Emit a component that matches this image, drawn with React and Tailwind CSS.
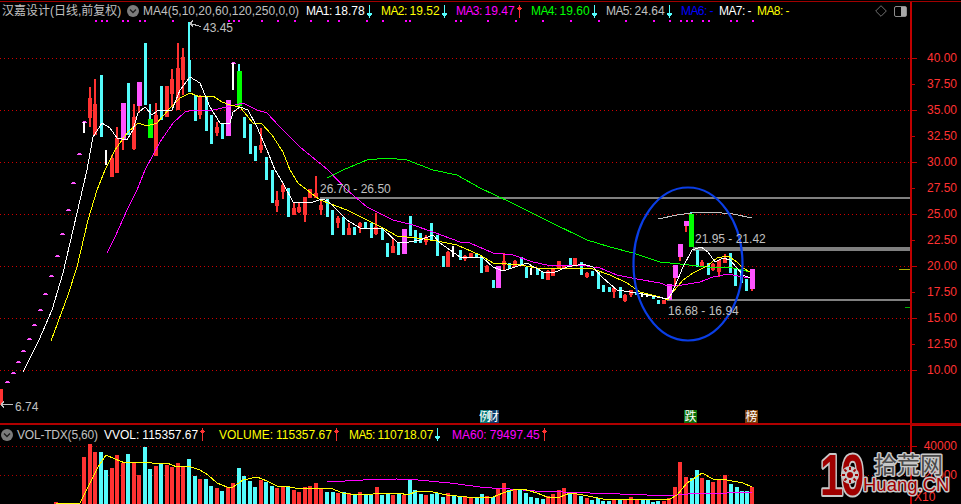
const RED = "#ff3232";
const CYAN = "#54fcfc";
const PINK = "#ff54ff";
const GREEN = "#00ff00";
const WHITE = "#ffffff";

// [x, color, high, bodyTop, bodyBottom, low]
const candles = [
  [84, WHITE, 122, 122, 133, 133], [90, RED, 87, 98, 118, 127], [95, RED, 79, 104, 135, 135],
  [101, CYAN, 75, 75, 137, 137], [106, WHITE, 150, 150, 165, 165], [112, RED, 155, 158, 177, 177],
  [117, RED, 127, 138, 173, 173], [123, PINK, 103, 103, 140, 150], [128, CYAN, 83, 83, 135, 135],
  [134, RED, 104, 117, 149, 150], [139, PINK, 82, 82, 106, 113], [145, CYAN, 43, 43, 105, 105],
  [150, GREEN, 104, 119, 138, 138], [156, RED, 103, 115, 156, 156], [161, CYAN, 86, 86, 120, 120],
  [167, RED, 86, 86, 117, 117], [172, RED, 69, 79, 94, 107], [178, RED, 43, 68, 110, 110],
  [183, RED, 48, 57, 80, 95], [189, CYAN, 22, 60, 92, 92], [195, CYAN, 95, 95, 121, 121],
  [200, RED, 95, 97, 115, 119], [206, CYAN, 97, 97, 131, 131], [211, CYAN, 115, 115, 144, 144],
  [217, RED, 122, 127, 133, 136], [222, CYAN, 123, 123, 139, 139], [228, PINK, 100, 100, 136, 136],
  [233, WHITE, 63, 63, 90, 90], [239, GREEN, 64, 71, 106, 106], [244, CYAN, 117, 117, 138, 138],
  [250, CYAN, 124, 124, 154, 154], [255, CYAN, 146, 146, 161, 161], [261, RED, 128, 145, 150, 153],
  [266, CYAN, 157, 157, 180, 180], [272, CYAN, 170, 170, 203, 203], [277, RED, 191, 200, 206, 212],
  [283, RED, 183, 185, 192, 199], [288, CYAN, 188, 188, 217, 217], [294, RED, 202, 208, 215, 215],
  [299, RED, 202, 207, 212, 213], [305, RED, 197, 197, 215, 222], [310, RED, 189, 189, 198, 198],
  [316, RED, 176, 193, 198, 198], [321, RED, 200, 205, 210, 215], [327, CYAN, 199, 199, 217, 217],
  [332, CYAN, 210, 210, 235, 235], [338, RED, 216, 218, 223, 228], [343, CYAN, 217, 217, 235, 235],
  [349, RED, 223, 228, 235, 235], [354, CYAN, 227, 227, 235, 235], [360, RED, 222, 223, 227, 233],
  [365, CYAN, 222, 222, 228, 228], [371, CYAN, 223, 223, 238, 238], [376, RED, 213, 227, 234, 235],
  [382, CYAN, 228, 228, 240, 240], [387, CYAN, 243, 243, 257, 257], [393, RED, 238, 246, 253, 253],
  [398, CYAN, 243, 243, 255, 255], [404, PINK, 229, 229, 254, 254], [410, CYAN, 216, 216, 236, 236],
  [415, CYAN, 230, 230, 243, 243], [420, CYAN, 233, 233, 243, 243], [426, RED, 235, 237, 242, 245],
  [431, CYAN, 223, 223, 241, 241], [437, CYAN, 235, 235, 256, 256], [443, CYAN, 256, 256, 267, 267],
  [448, RED, 251, 252, 267, 267], [453, WHITE, 246, 246, 257, 257], [460, CYAN, 250, 250, 260, 260],
  [465, RED, 255, 256, 259, 261], [471, RED, 253, 253, 258, 258], [476, CYAN, 253, 253, 258, 258],
  [481, CYAN, 256, 256, 273, 273], [487, RED, 265, 266, 272, 272], [493, CYAN, 280, 280, 288, 288],
  [498, PINK, 266, 266, 288, 288], [504, RED, 253, 261, 265, 270], [509, CYAN, 263, 263, 269, 269],
  [515, RED, 260, 261, 267, 267], [521, CYAN, 257, 257, 266, 266], [526, CYAN, 267, 267, 278, 278],
  [531, WHITE, 268, 268, 275, 275], [537, CYAN, 268, 268, 275, 275], [542, CYAN, 272, 272, 279, 279],
  [548, RED, 270, 271, 280, 280], [553, RED, 268, 268, 276, 276], [559, RED, 261, 261, 268, 268],
  [564, RED, 265, 265, 268, 268], [570, CYAN, 258, 258, 266, 266], [575, RED, 258, 258, 265, 265],
  [581, CYAN, 262, 262, 275, 275], [587, RED, 272, 273, 277, 278], [592, CYAN, 271, 271, 276, 276],
  [598, CYAN, 272, 272, 289, 289], [603, CYAN, 285, 285, 292, 292], [609, CYAN, 287, 287, 292, 292],
  [614, RED, 288, 288, 292, 298], [620, CYAN, 287, 287, 298, 298], [625, RED, 294, 295, 301, 302],
  [631, RED, 290, 290, 295, 297], [636, CYAN, 292, 292, 295, 295], [642, WHITE, 293, 293, 297, 297],
  [647, WHITE, 294, 294, 297, 297], [653, CYAN, 295, 295, 299, 299], [658, CYAN, 300, 300, 304, 304],
  [664, RED, 300, 300, 304, 304], [669, PINK, 284, 284, 300, 300], [675, PINK, 265, 265, 278, 287],
  [680, PINK, 244, 244, 257, 261], [686, PINK, 221, 221, 226, 232], [691, GREEN, 212, 214, 247, 247],
  [697, CYAN, 250, 250, 267, 267], [702, RED, 260, 262, 266, 267], [708, CYAN, 263, 263, 275, 275],
  [713, RED, 263, 264, 270, 271], [719, RED, 260, 260, 272, 277], [725, RED, 254, 258, 263, 263],
  [730, CYAN, 253, 253, 273, 273], [735, CYAN, 268, 268, 286, 286], [741, CYAN, 270, 270, 283, 283],
  [746, CYAN, 279, 279, 291, 291], [752, PINK, 269, 269, 289, 291],
];

const limitMarks = [[7, 382], [13, 373], [18, 362], [23, 351], [29, 339], [34, 325], [40, 310], [45, 294], [51, 276], [57, 256], [62, 234], [68, 210], [73, 183], [79, 154], [84, 122], [233, 63]];

const topDots = [95, 101, 106, 122, 127, 139, 144, 172, 228, 233, 238, 261, 277, 294, 310, 327, 338, 366, 382, 405, 409, 455, 460, 487, 515, 542, 570, 598, 625, 653, 669, 680, 686, 691, 702, 708, 730, 736, 752];

const maWhite = [[23, 372], [39, 340], [52, 310], [63, 273], [77, 213], [87, 170], [93, 137], [102, 123], [110, 128], [117, 138], [127, 140], [133, 130], [138, 113], [145, 107], [152, 115], [157, 111], [172, 110], [180, 90], [190, 77], [200, 83], [210, 107], [220, 123], [230, 123], [233, 112], [240, 107], [248, 110], [257, 127], [267, 150], [275, 170], [283, 183], [293, 202], [310, 203], [322, 199], [328, 201], [347, 220], [360, 228], [383, 229], [397, 242], [403, 243], [420, 240], [433, 235], [440, 243], [460, 257], [482, 257], [493, 267], [503, 271], [515, 267], [527, 263], [543, 272], [553, 273], [567, 267], [583, 264], [593, 267], [603, 278], [617, 290], [637, 293], [657, 297], [668, 299], [672, 293], [683, 267], [692, 250], [701, 247], [708, 252], [715, 262], [723, 258], [730, 260], [737, 268], [743, 275], [750, 278]];

const maYellow = [[51, 341], [68, 295], [77, 267], [88, 220], [97, 190], [105, 170], [115, 150], [127, 133], [138, 123], [147, 126], [157, 123], [170, 108], [180, 98], [190, 93], [200, 97], [213, 96], [222, 102], [230, 105], [240, 107], [253, 123], [262, 124], [272, 135], [283, 152], [290, 170], [298, 183], [320, 200], [347, 210], [367, 220], [383, 228], [397, 236], [417, 238], [437, 241], [457, 245], [480, 255], [493, 263], [507, 264], [520, 265], [543, 269], [560, 268], [573, 268], [593, 269], [610, 275], [627, 283], [640, 292], [660, 297], [668, 300], [672, 293], [683, 280], [693, 273], [707, 266], [717, 258], [728, 256], [737, 262], [743, 268], [750, 272]];

const maMagenta = [[107, 253], [115, 237], [127, 210], [137, 190], [145, 170], [160, 142], [173, 123], [185, 112], [193, 110], [213, 110], [227, 107], [243, 103], [257, 110], [267, 113], [280, 127], [300, 147], [328, 170], [347, 190], [367, 207], [393, 220], [413, 225], [433, 232], [460, 242], [470, 243], [493, 253], [513, 255], [533, 262], [547, 265], [580, 265], [600, 268], [617, 275], [637, 279], [660, 283], [668, 286], [682, 285], [700, 282], [713, 277], [728, 274], [738, 276], [750, 278]];

const maGreen = [[327, 178], [343, 170], [367, 160], [387, 158], [407, 160], [433, 170], [457, 175], [480, 188], [510, 202], [550, 222], [587, 240], [610, 247], [633, 253], [660, 262], [680, 264], [707, 267], [733, 268], [750, 272]];

const maGray = [[658, 219], [677, 215], [692, 213], [710, 212], [733, 214], [752, 218]];

// [x, isCyan, top in the 3x crop]
const volBars = [
  [56, 0, 307], [84, 0, 172], [90, 0, 132], [95, 0, 157], [101, 1, 155], [106, 1, 210], [112, 0, 203], [117, 0, 165], [123, 0, 190], [128, 1, 162], [134, 0, 187], [139, 0, 225], [145, 1, 140], [150, 1, 207], [156, 0, 197], [161, 1, 190], [167, 0, 195], [172, 0, 200], [178, 0, 190], [183, 0, 198], [189, 1, 177], [195, 1, 228], [200, 0, 238], [206, 1, 237], [211, 1, 258], [217, 0, 265], [222, 1, 272], [228, 0, 262], [233, 0, 250], [239, 1, 204], [244, 1, 228], [250, 1, 242], [255, 1, 260], [261, 0, 241], [266, 1, 245], [272, 1, 257], [277, 0, 265], [283, 0, 262], [288, 1, 258], [294, 0, 270], [299, 0, 277], [305, 0, 260], [310, 0, 258], [316, 0, 250], [321, 0, 268], [327, 1, 275], [333, 1, 275], [338, 0, 280], [344, 1, 277], [349, 0, 280], [355, 1, 283], [360, 0, 277], [366, 1, 283], [371, 1, 285], [377, 0, 262], [382, 1, 285], [388, 1, 280], [393, 0, 285], [399, 1, 282], [404, 0, 284], [410, 1, 238], [415, 1, 270], [421, 1, 282], [426, 0, 285], [432, 1, 282], [437, 1, 280], [443, 1, 290], [448, 0, 280], [454, 1, 285], [460, 1, 290], [465, 0, 292], [471, 0, 293], [477, 1, 292],
  [482, 1, 282], [487, 0, 288], [493, 1, 292], [498, 0, 265], [504, 0, 250], [509, 1, 270], [515, 0, 270], [520, 1, 268], [526, 1, 278], [531, 1, 290], [537, 1, 293], [543, 1, 296], [548, 0, 288], [553, 0, 283], [559, 0, 270], [564, 0, 265], [570, 1, 280], [575, 0, 283], [581, 1, 288], [587, 0, 295], [592, 1, 300], [598, 1, 293], [603, 1, 303], [609, 1, 302], [614, 0, 297], [620, 1, 297], [625, 0, 298], [631, 0, 292], [637, 0, 296], [643, 1, 297], [648, 1, 299], [653, 1, 305], [658, 1, 303], [664, 0, 302], [669, 0, 295], [675, 0, 260], [680, 0, 185], [686, 0, 230], [692, 1, 235], [697, 1, 210], [702, 0, 235], [708, 1, 240], [713, 0, 247], [719, 0, 240], [725, 0, 224], [731, 1, 252], [737, 1, 262], [742, 1, 272], [747, 1, 273], [752, 0, 260],
];

const volYellow = [[56, 503], [80, 503], [90, 483], [98, 467], [106, 455], [115, 459], [125, 463], [135, 462], [147, 462], [157, 464], [167, 463], [177, 467], [188, 466], [200, 470], [208, 475], [217, 483], [227, 487], [233, 487], [243, 480], [257, 477], [267, 481], [277, 486], [290, 487], [300, 489], [330, 488], [343, 493], [357, 495], [373, 494], [400, 493], [407, 495], [418, 491], [433, 492], [447, 495], [467, 497], [480, 497], [493, 497], [503, 493], [513, 490], [523, 489], [537, 493], [547, 497], [560, 497], [570, 493], [583, 495], [603, 499], [647, 499], [670, 499], [677, 495], [687, 483], [702, 473], [713, 479], [727, 480], [743, 483], [752, 487]];

const volMagenta = [[327, 482], [363, 480], [397, 479], [418, 480], [450, 483], [480, 487], [492, 488], [510, 489], [535, 491], [563, 492], [590, 493], [620, 494], [647, 495], [677, 495], [700, 493], [727, 493], [752, 492]];

const priceAxis = [
  ["40.00", true], ["37.50", false], ["35.00", true], ["32.50", false], ["30.00", true], ["27.50", false], ["25.00", true],
  ["22.50", false], ["20.00", true], ["17.50", false], ["15.00", true], ["12.50", false], ["10.00", true],
];

const pts = (list) => list.map((p) => p.join(",")).join(" ");

const textFont = { fontFamily: "'Liberation Sans', Arial, sans-serif", fontSize: 12 };

function Candle({ c }) {
  const [x, color, high, top, bottom, low] = c;
  const wide = color === PINK || color === GREEN ? 5 : color === RED ? 4 : color === CYAN ? 3 : 2;
  const wickColor = color === GREEN ? CYAN : color === PINK ? RED : color;
  return (
    <g>
      <rect x={x - 1} y={high} width={2} height={Math.max(low - high, 1)} fill={wickColor} />
      <rect x={x - Math.floor(wide / 2)} y={top} width={wide} height={Math.max(bottom - top, 1)} fill={color} />
    </g>
  );
}

function Arrow({ up }) {
  const color = up ? RED : CYAN;
  return (
    <svg width="5" height="13" viewBox="0 0 5 13" className="shrink-0" shapeRendering="crispEdges">
      {up ? (
        <path d="M2 0h1v13h-1zM1 2h3v3h-3zM0 3h5v1h-5z" fill={color} />
      ) : (
        <path d="M2 0h1v13h-1zM1 8h3v3h-3zM0 8h5v2h-5z" fill={color} />
      )}
    </svg>
  );
}

function ChevronDot({ size = 12 }) {
  return (
    <svg width={size} height={size} viewBox="0 0 12 12" className="shrink-0">
      <circle cx="6" cy="6" r="6" fill="#7c7c7c" />
      <path d="M3 4.5l3 3 3-3" fill="none" stroke="#1c1c1c" strokeWidth="1.3" />
    </svg>
  );
}

function MaItem({ label, value, color, arrow, className = "" }) {
  return (
    <div className={`flex items-center shrink-0 whitespace-nowrap ${className}`} style={{ color }}>
      <span className={label.length <= 3 ? "tracking-[-0.6px]" : ""}>{label}:</span>
      <span className="ml-[3px]">{value}</span>
      {arrow && (
        <span className="ml-[2px] flex">
          <Arrow up={arrow === "up"} />
        </span>
      )}
    </div>
  );
}

function PriceChart() {
  return (
    <svg width="910" height="403" viewBox="0 20 910 403" className="block">
      <g shapeRendering="crispEdges">
        {[58, 110, 162, 214, 266, 318, 370].map((y) => (
          <line key={y} x1="0" x2="910" y1={y + 0.5} y2={y + 0.5} stroke="#d00000" strokeDasharray="1 3" />
        ))}
      </g>
      {topDots.map((x) => (
        <rect key={x} x={x} y="20" width="2" height="2" fill="#ff00ff" />
      ))}
      <g shapeRendering="crispEdges">
        <rect x="320" y="197" width="590" height="2" fill="#808080" />
        <rect x="693" y="247" width="217" height="4" fill="#808080" />
        <rect x="667" y="299" width="243" height="2" fill="#808080" />
        <rect x="899" y="269" width="11" height="1" fill="#b0b000" />
        <rect x="905" y="307" width="5" height="1" fill="#00b000" />
        <rect x="0" y="389" width="3" height="16" fill={RED} />
        {limitMarks.map(([x, y]) => (
          <g key={x}>
            <rect x={x - 2} y={y} width={5} height={1} fill={PINK} />
            <rect x={x - 1} y={y - 1} width={3} height={1} fill={PINK} />
          </g>
        ))}
        {candles.map((c) => (
          <Candle key={c[0]} c={c} />
        ))}
        <polyline points={pts(maGreen)} fill="none" stroke={GREEN} />
        <polyline points={pts(maMagenta)} fill="none" stroke="#ff00ff" />
        <polyline points={pts(maYellow)} fill="none" stroke="#ffff00" />
        <polyline points={pts(maWhite)} fill="none" stroke="#ffffff" />
        <polyline points={pts(maGray)} fill="none" stroke="#c0c0c0" />
      </g>
      <ellipse cx="688" cy="264" rx="54.5" ry="76.5" fill="none" stroke="#0a3ee6" strokeWidth="2.2" />
      <g fill="#c0c0c0" style={textFont}>
        <text x="203" y="32">43.45</text>
        <text x="320" y="193">26.70 - 26.50</text>
        <text x="695" y="243">21.95 - 21.42</text>
        <text x="668" y="315">16.68 - 16.94</text>
        <text x="15" y="410.5">6.74</text>
      </g>
      <g fill="none" stroke="#c0c0c0" shapeRendering="crispEdges">
        <path d="M190 23.5l11 3M190 23.5l3-3M190 23.5l3 3" />
        <path d="M1 404.5h12M1 404.5l3-3M1 404.5l3 3" />
      </g>
      <g shapeRendering="crispEdges">
        <rect x="480" y="410" width="10" height="13" fill="#0a7a78" />
        <rect x="490" y="410" width="9" height="13" fill="#0a3a6a" />
        <rect x="684" y="410" width="13" height="13" fill="#0a700a" />
        <rect x="745" y="410" width="13" height="13" fill="#7a3c0a" />
      </g>
      <g fill="#ffffff" style={{ fontFamily: "'Noto Sans CJK SC', sans-serif", fontSize: 12 }}>
        <text x="479" y="420.5" letterSpacing="-4">例财</text>
        <text x="684.5" y="420.5">跌</text>
        <text x="745.5" y="420.5">榜</text>
      </g>
    </svg>
  );
}

function VolumeChart() {
  return (
    <svg width="910" height="60" viewBox="0 444 910 60" className="block">
      <g shapeRendering="crispEdges">
        {[446, 475].map((y) => (
          <line key={y} x1="0" x2="910" y1={y + 0.5} y2={y + 0.5} stroke="#b00000" strokeDasharray="1 3" />
        ))}
        {volBars.map(([x, cyan, top]) => {
          const y = Math.round(400 + top / 3);
          return <rect key={x} x={x - 2} y={y} width={4} height={504 - y} fill={cyan ? CYAN : RED} />;
        })}
        <polyline points={pts(volMagenta)} fill="none" stroke="#ff00ff" />
        <polyline points={pts(volYellow)} fill="none" stroke="#ffff00" />
      </g>
    </svg>
  );
}

function Watermark() {
  const haloStyle = { paintOrder: "stroke", strokeLinejoin: "round" };
  return (
    <svg width="142" height="56" viewBox="0 0 142 56" className="absolute right-0 bottom-[1px]">
      <text
        transform="translate(1 48) scale(0.72 1)"
        fill="#a00000"
        stroke="#c8c8c8"
        strokeWidth="4"
        style={{ ...haloStyle, fontFamily: "'Liberation Sans', sans-serif", fontSize: 58, fontWeight: 700, letterSpacing: -3 }}
      >
        10
      </text>
      <g>
        <circle cx="31" cy="28" r="9" fill="#c8c8c8" />
        <circle cx="31" cy="28" r="3" fill="#a00000" />
        {[0, 45, 90, 135, 180, 225, 270, 315].map((a) => (
          <rect key={a} x="30" y="20" width="2" height="3" fill="#a00000" transform={`rotate(${a} 31 28)`} />
        ))}
      </g>
      <text x="55" y="26" fill="#4a4a4a" stroke="#c8c8c8" strokeWidth="3" style={{ ...haloStyle, fontFamily: "'Noto Sans CJK SC', sans-serif", fontSize: 23 }}>
        拾荒网
      </text>
      <text x="44" y="44" fill="#a00000" stroke="#c8c8c8" strokeWidth="3" style={{ ...haloStyle, fontFamily: "'Liberation Sans', sans-serif", fontSize: 18.5 }}>
        Huang.CN
      </text>
    </svg>
  );
}

export default function App() {
  return (
    <div className="relative w-[961px] h-[504px] overflow-hidden bg-black font-['Liberation_Sans','Noto_Sans_CJK_SC',sans-serif] text-[12px] leading-none">
      <div className="h-[1px] bg-black" />
      <div className="h-[1px] bg-[#a00000]" />
      <div className="flex h-[423px] border-b-2 border-[#b00000]">
        <div className="w-[910px] shrink-0">
          <div className="flex items-center h-[18px] pl-[2px] text-[#c0c0c0]">
            <span className="w-[125px] shrink-0 whitespace-nowrap">汉嘉设计(日线,前复权)</span>
            <ChevronDot />
            <span className="ml-[4px] w-[163px] shrink-0 whitespace-nowrap">MA4(5,10,20,60,120,250,0,0)</span>
            <MaItem label="MA1" value="18.78" color="#ffffff" arrow="down" className="w-[75px]" />
            <MaItem label="MA2" value="19.52" color="#ffff00" arrow="down" className="w-[75px]" />
            <MaItem label="MA3" value="19.47" color="#ff00ff" arrow="up" className="w-[75px]" />
            <MaItem label="MA4" value="19.60" color="#00ff00" arrow="down" className="w-[75px]" />
            <MaItem label="MA5" value="24.64" color="#c0c0c0" arrow="down" className="w-[75px]" />
            <MaItem label="MA6" value="-" color="#0000ff" className="w-[38px]" />
            <MaItem label="MA7" value="-" color="#ffffff" className="w-[38px]" />
            <MaItem label="MA8" value="-" color="#ffff00" />
            <div className="ml-auto mr-[3px] flex items-center gap-[7px]">
              <svg width="12" height="12" viewBox="0 0 12 12" className="shrink-0">
                <path d="M6 .7L11.3 6 6 11.3.7 6z" fill="none" stroke="#707070" />
              </svg>
              <div className="flex w-[13px] h-[11px] rounded-[2px] border border-[#8c8c8c] justify-end">
                <div className="w-[5px] h-full bg-[#a8a8a8]" />
              </div>
            </div>
          </div>
          <PriceChart />
        </div>
        <div className="flex-1 border-l-2 border-[#c00000] pt-[43px] text-[#ff3232]">
          {priceAxis.map(([label, major]) => (
            <div key={label} className="flex items-center justify-between h-[26px] pr-[4px]">
              <div className={major ? "w-[5px] h-[1px] bg-[#c00000]" : "w-[3px] h-[1px] bg-[#c00000]"} />
              <span>{label}</span>
            </div>
          ))}
        </div>
      </div>
      <div className="flex h-[79px]">
        <div className="w-[910px] shrink-0">
          <div className="flex items-center h-[19px] pl-[1px] text-[#c0c0c0]">
            <ChevronDot />
            <span className="ml-[4px] w-[87px] shrink-0 whitespace-nowrap tracking-[-0.2px]">VOL-TDX(5,60)</span>
            <MaItem label="VVOL" value="115357.67" color="#ffffff" arrow="up" className="w-[115px]" />
            <MaItem label="VOLUME" value="115357.67" color="#ffff00" arrow="up" className="w-[130px]" />
            <MaItem label="MA5" value="110718.07" color="#ffff00" arrow="down" className="w-[103px]" />
            <MaItem label="MA60" value="79497.45" color="#ff00ff" arrow="up" />
          </div>
          <VolumeChart />
        </div>
        <div className="flex-1 border-l-2 border-[#c00000] text-[#ff3232]">
          <div className="h-[1px] bg-[#c00000]" />
          <div className="flex items-center justify-between h-[14px] mt-[13px] pr-[4px]">
            <div className="w-[5px] h-[1px] bg-[#c00000]" />
            <span>40000</span>
          </div>
          <div className="flex items-center justify-between h-[14px] mt-[15px] pr-[4px]">
            <div className="w-[5px] h-[1px] bg-[#c00000]" />
            <span>20000</span>
          </div>
          <div className="flex items-center h-[14px] mt-[8px] pl-[2px]">
            <span>X10</span>
          </div>
        </div>
      </div>
      <Watermark />
    </div>
  );
}
